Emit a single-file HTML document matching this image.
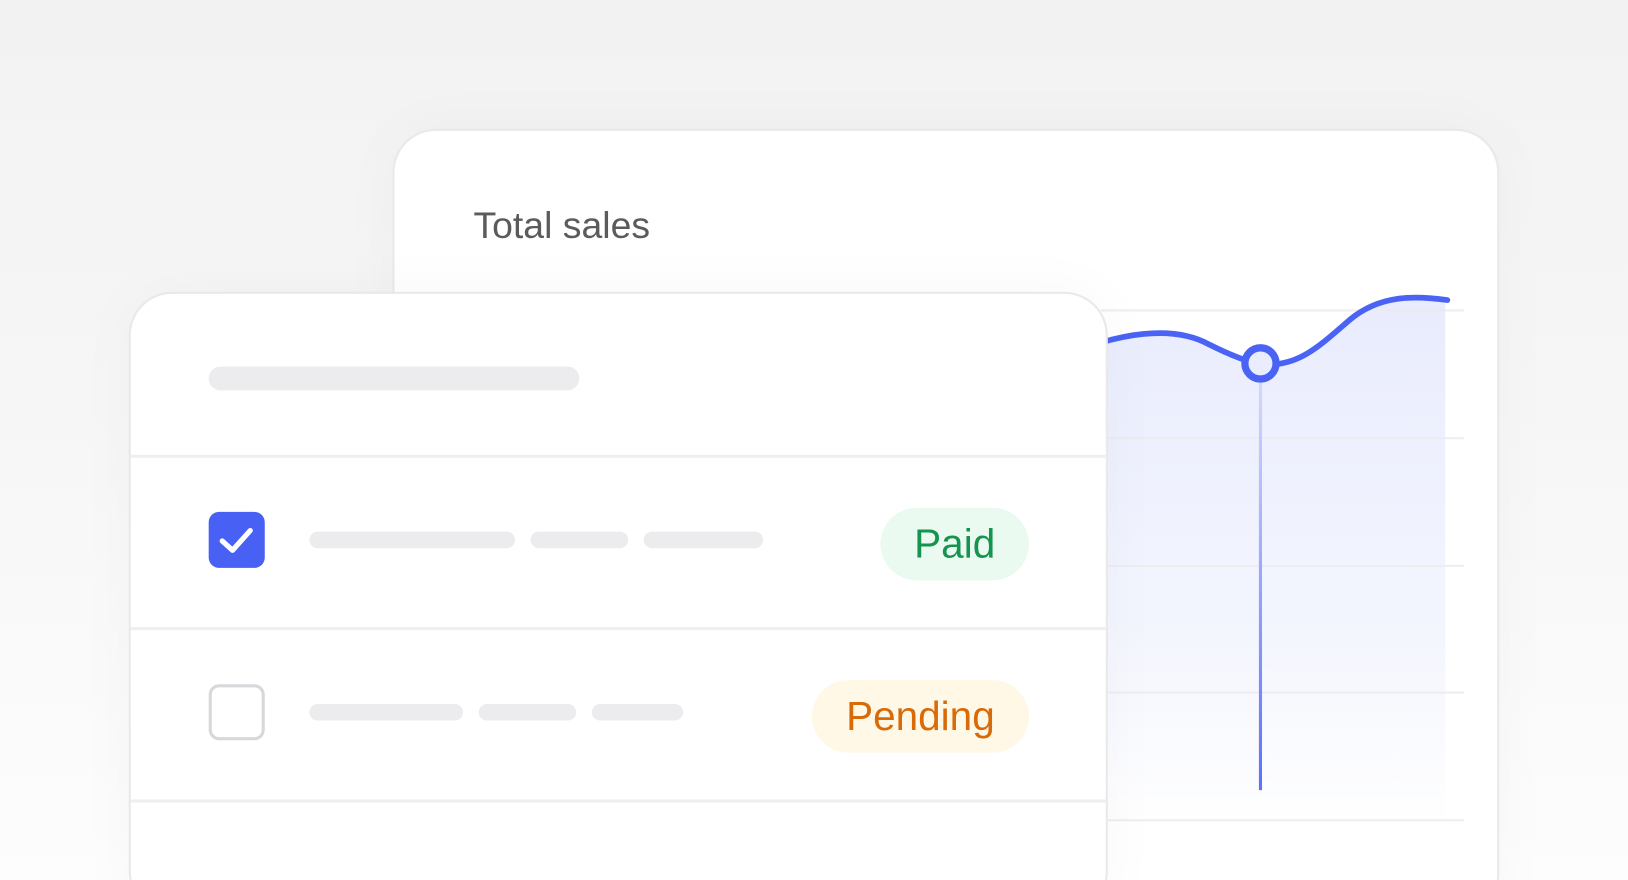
<!DOCTYPE html>
<html><head><style>
html,body{margin:0;padding:0;width:1628px;height:880px;overflow:hidden;background:#f4f4f4;}
#w{position:absolute;left:0;top:0;width:1568px;height:848px;transform:scale(1.03827);transform-origin:0 0;
background:linear-gradient(180deg,#f2f2f2 0%,#f6f6f6 45%,#fdfdfd 100%);font-family:"Liberation Sans",sans-serif;overflow:hidden}
.card{position:absolute;background:#fff;border:2px solid #e9e9ea;border-radius:42px;box-sizing:border-box;box-shadow:0 0 60px rgba(0,0,0,0.03)}
.bar{position:absolute;height:16px;border-radius:8px;background:#ececee}
.sep{position:absolute;left:0;right:0;height:3px;background:#efeff0}
.pill{position:absolute;height:70px;border-radius:35px;font-size:39px;line-height:72px;text-align:center}
</style></head><body><div id="w">
<div class="card" style="left:378px;top:124px;width:1066px;height:760px"></div>
<div style="position:absolute;left:456px;top:196px;font-size:36px;color:#5b5b5b">Total sales</div>
<svg style="position:absolute;left:0;top:0" width="1568" height="848">
<defs>
<linearGradient id="f" gradientUnits="userSpaceOnUse" x1="0" y1="290" x2="0" y2="800"><stop offset="0" stop-color="#e9ecfd"/><stop offset="0.6" stop-color="#f3f5fe"/><stop offset="1" stop-color="#ffffff"/></linearGradient>
<linearGradient id="v" gradientUnits="userSpaceOnUse" x1="0" y1="366" x2="0" y2="761"><stop offset="0" stop-color="#d3d9fc"/><stop offset="1" stop-color="#5b72f5"/></linearGradient>
</defs>
<path d="M1060 330 C1105 317 1140 318 1165 332 C1185 342 1200 348 1214 351 C1250 354 1270 334 1300 308 C1330 283 1365 285 1392 289 L1392 800 L1060 800 Z" fill="url(#f)"/>
<g stroke="#ebebee" stroke-width="2" opacity="0.8">
<line x1="1060" y1="299" x2="1410" y2="299"/><line x1="1060" y1="422" x2="1410" y2="422"/>
<line x1="1060" y1="545" x2="1410" y2="545"/><line x1="1060" y1="667" x2="1410" y2="667"/><line x1="1060" y1="790" x2="1410" y2="790"/></g>
<line x1="1214" y1="366" x2="1214" y2="761" stroke="url(#v)" stroke-width="3"/>
<path d="M1060 330 C1105 317 1140 318 1165 332 C1185 342 1200 348 1214 351 C1250 354 1270 334 1300 308 C1330 283 1365 285 1394 289" fill="none" stroke="#4b63f5" stroke-width="5.5" stroke-linecap="round"/>
<circle cx="1214" cy="350" r="15" fill="#e9edfe" stroke="#4b63f5" stroke-width="7"/>
</svg>
<div class="card" style="left:124px;top:281px;width:943px;height:600px;overflow:hidden">
<div class="bar" style="left:75px;top:70px;width:357px;height:23px;border-radius:12px"></div>
<div class="sep" style="top:155px"></div>
<div style="position:absolute;left:75px;top:210px;width:54px;height:54px;border-radius:10px;background:#4960f5">
<svg width="54" height="54"><path d="M13 28 L23 37 L40 18" fill="none" stroke="#fff" stroke-width="5" stroke-linecap="round" stroke-linejoin="round"/></svg></div>
<div class="bar" style="left:172px;top:229px;width:198px"></div>
<div class="bar" style="left:385px;top:229px;width:94px"></div>
<div class="bar" style="left:494px;top:229px;width:115px"></div>
<div class="pill" style="left:722px;top:206px;width:143px;background:#eafaf0;color:#15944f">Paid</div>
<div class="sep" style="top:321px"></div>
<div style="position:absolute;left:75px;top:376px;width:54px;height:54px;border-radius:10px;border:3px solid #d8d8dc;box-sizing:border-box"></div>
<div class="bar" style="left:172px;top:395px;width:148px"></div>
<div class="bar" style="left:335px;top:395px;width:94px"></div>
<div class="bar" style="left:444px;top:395px;width:88px"></div>
<div class="pill" style="left:656px;top:372px;width:209px;background:#fff8e6;color:#d96a0a">Pending</div>
<div class="sep" style="top:487px"></div>
</div>
</div></body></html>
